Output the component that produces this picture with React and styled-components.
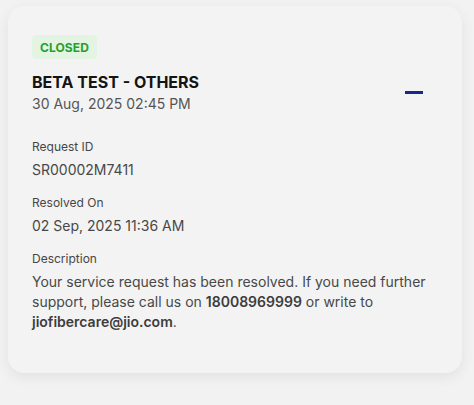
import styled, { createGlobalStyle } from "styled-components";

const Global = createGlobalStyle`
  body {
    margin: 0;
    background: #f2f2f2;
    font-family: Inter, "Noto Sans", sans-serif;
  }
`;

const Page = styled.div`
  padding: 6px 12px 34px 8px;
`;

const Card = styled.div`
  background: #f3f3f3;
  border-radius: 16px;
  box-shadow: 0 4px 14px rgba(0, 0, 0, 0.07);
  padding: 29px 24px 41px 24px;
`;

const Badge = styled.span`
  display: inline-flex;
  align-items: center;
  height: 24px;
  padding: 0 8px;
  border-radius: 4px;
  background: #e3f4e3;
  color: #25a02c;
  font-size: 12px;
  font-weight: 700;
  letter-spacing: 0.1px;
`;

const Header = styled.div`
  display: flex;
  align-items: center;
  justify-content: space-between;
  margin-top: 12px;
`;

const Title = styled.h2`
  margin: 0;
  font-size: 16px;
  line-height: 23px;
  font-weight: 700;
  color: #141414;
`;

const DateText = styled.div`
  font-size: 14px;
  line-height: 20px;
  color: #555;
`;

const Collapse = styled.button`
  border: 0;
  background: none;
  padding: 0;
  margin-right: 15px;
  width: 18px;
  height: 18px;
  display: flex;
  align-items: center;
  cursor: pointer;

  &::before {
    content: "";
    display: block;
    width: 18px;
    height: 2.5px;
    background: #142a88;
  }
`;

const Field = styled.div`
  margin-top: ${(p) => p.$gap}px;
`;

const Label = styled.div`
  font-size: 12px;
  line-height: 16px;
  color: #464646;
  margin-bottom: 5px;
`;

const Value = styled.div`
  font-size: 14px;
  line-height: 20px;
  color: #484848;

  b {
    font-weight: 600;
    color: #3c3c3c;
  }
`;

export default function App() {
  return (
    <>
      <Global />
      <Page>
        <Card>
          <Badge>CLOSED</Badge>
          <Header>
            <div>
              <Title>BETA TEST - OTHERS</Title>
              <DateText>30 Aug, 2025 02:45 PM</DateText>
            </div>
            <Collapse aria-label="Collapse" />
          </Header>
          <Field $gap={25}>
            <Label>Request ID</Label>
            <Value>SR00002M7411</Value>
          </Field>
          <Field $gap={15}>
            <Label>Resolved On</Label>
            <Value>02 Sep, 2025 11:36 AM</Value>
          </Field>
          <Field $gap={15}>
            <Label>Description</Label>
            <Value>
              Your service request has been resolved. If you need further
              support, please call us on <b>18008969999</b> or write to{" "}
              <b>jiofibercare@jio.com</b>.
            </Value>
          </Field>
        </Card>
      </Page>
    </>
  );
}
